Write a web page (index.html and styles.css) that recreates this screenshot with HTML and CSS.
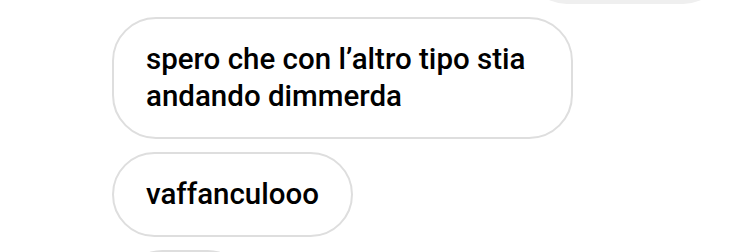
FILE: index.html
```html
<!DOCTYPE html>
<html>
<head>
    <meta charset="utf-8">
    <title>Chat</title>
    <link rel="stylesheet" href="styles.css">
</head>
<body>
    <div class="thread">
        <div class="message message-sent"></div>
        <div class="message message-received">spero che con l’altro tipo stia andando dimmerda</div>
        <div class="message message-received">vaffanculooo</div>
        <div class="message message-received message-next">&nbsp;</div>
    </div>
</body>
</html>
```

FILE: styles.css
```css
* {
    box-sizing: border-box;
}

body {
    margin: 0;
    background: #ffffff;
    font-family: Roboto, 'Liberation Sans', sans-serif;
    color: #000000;
    overflow: hidden;
}

.thread {
    display: flex;
    flex-direction: column;
    gap: 13px;
    margin-top: -80px;
    padding: 0 24px 0 112px;
}

.message {
    max-width: 461px;
    padding: 22px 32px;
    border-radius: 44px;
    font-size: 29.5px;
    font-weight: 500;
    line-height: 37px;
}

.message-sent {
    align-self: flex-end;
    width: 200px;
    height: 84px;
    background: #efefef;
}

.message-received {
    align-self: flex-start;
    border: 2px solid #dedede;
    background: #ffffff;
}

.message-next {
    width: 130px;
    margin-left: 8px;
}
```
